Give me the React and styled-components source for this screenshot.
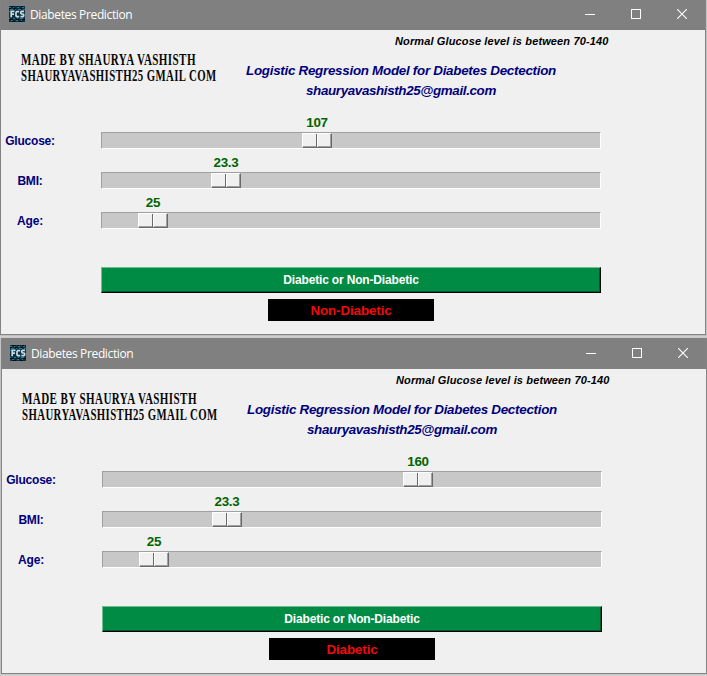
import React from "react";
import styled, { createGlobalStyle } from "styled-components";

const GlobalStyle = createGlobalStyle`
  * { box-sizing: border-box; }
  body { margin: 0; background: #d0d0d0; overflow: hidden; }
`;

const Desktop = styled.main`
  width: 707px;
  height: 676px;
  overflow: hidden;
  display: flex;
  flex-direction: column;
  gap: 3px;
  background: linear-gradient(#c3c3c3 0 335px, #aaa 335px, #d4d4d4 336px, #c4c4c4 338px, #c3c3c3 674px, #d8d8d8 676px);
  font-family: "Liberation Sans", Arial, sans-serif;
`;

const Window = styled.section`
  width: 706px;
  height: ${(p) => (p.$offset ? 336 : 335)}px;
  margin-left: ${(p) => p.$offset}px;
  flex: none;
  display: flex;
  flex-direction: column;
  border: 1px solid #838383;
  border-top: 0;
  background: #f0f0f0;
`;

const TitleBar = styled.header`
  height: ${(p) => (p.$offset ? 31 : 30)}px;
  flex: none;
  display: flex;
  align-items: center;
  padding: ${(p) => (p.$offset ? "0 0 1px 8px" : "0 0 2px 8px")};
  background: #808080;
  color: #fff;
`;

const TitleText = styled.h1`
  margin: 0 auto 0 5px;
  padding-top: 2px;
  font: 400 12px/16px "Open Sans", sans-serif;
  letter-spacing: -0.36px;
  white-space: nowrap;
`;

const Controls = styled.div`
  display: flex;
  width: 138px;
`;

const ControlButton = styled.button`
  width: 46px;
  height: 28px;
  display: grid;
  place-items: center;
  padding: 0;
  border: 0;
  background: none;
`;

const Content = styled.div`
  flex: 1;
  display: flex;
  flex-direction: column;
`;

const Banner = styled.div`
  height: 82px;
  display: grid;
  grid-template-columns: 215px 1fr;
`;

const Signature = styled.div`
  padding: 22px 0 0 20px;
`;

const SignatureLine = styled.div`
  width: max-content;
  font: 700 16px/16px "Liberation Serif", serif;
  letter-spacing: 0.6px;
  color: #080808;
  white-space: nowrap;
  transform-origin: 0 50%;
  transform: scaleX(${(p) => p.$squeeze});
`;

const Heading = styled.div`
  font-style: italic;
  font-weight: 700;
  white-space: nowrap;
`;

const Hint = styled.p`
  margin: 3px 0 0 179px;
  font-size: 11px;
  letter-spacing: 0.13px;
  line-height: 16px;
  color: #000;
`;

const ModelTitle = styled.h2`
  width: 370px;
  margin: 12px 0 0;
  font-size: 13.4px;
  letter-spacing: -0.28px;
  line-height: 20px;
  text-align: center;
  color: #00007c;
`;

const Email = styled.span`
  letter-spacing: -0.37px;
`;

const Field = styled.div`
  height: 40px;
  display: grid;
  grid-template-columns: 100px 500px;
`;

const FieldLabel = styled.label`
  width: 58px;
  padding-top: 20px;
  font-size: 12px;
  font-weight: 700;
  letter-spacing: -0.2px;
  line-height: 18px;
  text-align: center;
  color: #00007c;
`;

const SliderValue = styled.output`
  display: block;
  width: 60px;
  height: 20px;
  padding-top: 1px;
  font-size: 13.4px;
  font-weight: 700;
  letter-spacing: -0.25px;
  line-height: 19px;
  text-align: center;
  color: #006400;
`;

const Track = styled.div`
  height: 17px;
  border: 1px solid;
  border-color: #a0a0a0 #fff #fff #a0a0a0;
  background: #c8c8c8;
`;

const Thumb = styled.div`
  width: 30px;
  height: 15px;
  display: grid;
  grid-template-columns: 14px 1fr;
  border: 1px solid;
  border-color: #fff #696969 #696969 #fff;
  background: #f0f0f0;
  box-shadow: inset -1px -1px #a0a0a0;

  &::before {
    content: "";
    border-right: 1px solid #696969;
  }

  &::after {
    content: "";
    border-left: 1px solid #fff;
  }
`;

const Actions = styled.div`
  width: 500px;
  margin: 35px 0 0 100px;
  display: flex;
  flex-direction: column;
  align-items: center;
  gap: 6px;
`;

const PredictButton = styled.button`
  width: 500px;
  height: 26px;
  padding: 0;
  border: 1px solid;
  border-color: #6cbd90 #000 #000 #6cbd90;
  box-shadow: inset -1px -1px #005a2e;
  background: #008b45;
  color: #fff;
  font: 700 12px/24px "Liberation Sans", Arial, sans-serif;
  letter-spacing: -0.17px;
`;

const Result = styled.output`
  width: 166px;
  height: 22px;
  background: #000;
  color: #f00a0a;
  font-size: 13.4px;
  font-weight: 700;
  letter-spacing: -0.12px;
  line-height: 23px;
  text-align: center;
`;

function AppIcon() {
  return (
    <svg width="16" height="16" viewBox="0 0 16 16">
      <g shapeRendering="crispEdges">
        <path fill="#10303f" d="M0 0h16v16H0z" />
        <path
          stroke="#1b7f98"
          d="M0 1.5h2m2 0h1m3 0h2m3 0h2M1 3.5h3m2 0h1m2 0h3m2 0h2M0 12.5h1m3 0h2m2 0h1m2 0h3M2 14.5h2m3 0h2m3 0h1M0 5.5h1"
        />
        <path
          stroke="#030b18"
          d="M2 .5h3m3 0h1m3 0h2M0 2.5h2m3 0h2m4 0h2M0 13.5h4m3 0h3m3 0h3M3 15.5h3m4 0h3"
        />
      </g>
      <path
        fill="none"
        stroke="#c4dce2"
        strokeWidth="1.7"
        d="M2.2 11.2V5.4H5.5M2 8.2h3M10.2 5.6H7.8L7 6.5v3.3l.8.8h2.4M15 5.4h-2.6l-.6.7v1.2l.6.7h1.5l.7.7v1.2l-.7.7h-2.5"
      />
    </svg>
  );
}

function WindowControls() {
  return (
    <Controls>
      <ControlButton aria-label="Minimize">
        <svg width="10" height="10" shapeRendering="crispEdges">
          <path d="M0 5.5h10" stroke="#fff" />
        </svg>
      </ControlButton>
      <ControlButton aria-label="Maximize">
        <svg width="10" height="10" shapeRendering="crispEdges">
          <path d="M.5.5h9v9h-9z" stroke="#fff" fill="none" />
        </svg>
      </ControlButton>
      <ControlButton aria-label="Close">
        <svg width="10" height="10">
          <path d="m0 0 10 10M10 0 0 10" stroke="#fff" strokeWidth="1.1" />
        </svg>
      </ControlButton>
    </Controls>
  );
}

function Slider({ label, value, position }) {
  return (
    <Field>
      <FieldLabel>{label}</FieldLabel>
      <div>
        <SliderValue style={{ marginLeft: position - 14 }}>{value}</SliderValue>
        <Track>
          <Thumb style={{ marginLeft: position }} />
        </Track>
      </div>
    </Field>
  );
}

function PredictionWindow({ offset, glucose, glucosePosition, result }) {
  return (
    <Window $offset={offset}>
      <TitleBar $offset={offset}>
        <AppIcon />
        <TitleText>Diabetes Prediction</TitleText>
        <WindowControls />
      </TitleBar>
      <Content>
        <Banner>
          <Signature>
            <SignatureLine $squeeze={0.69}>MADE BY SHAURYA VASHISTH</SignatureLine>
            <SignatureLine $squeeze={0.674}>SHAURYAVASHISTH25 GMAIL COM</SignatureLine>
          </Signature>
          <Heading>
            <Hint>Normal Glucose level is between 70-140</Hint>
            <ModelTitle>
              Logistic Regression Model for Diabetes Dectection
              <br />
              <Email>shauryavashisth25@gmail.com</Email>
            </ModelTitle>
          </Heading>
        </Banner>
        <Slider label="Glucose:" value={glucose} position={glucosePosition} />
        <Slider label="BMI:" value="23.3" position={109} />
        <Slider label="Age:" value="25" position={36} />
        <Actions>
          <PredictButton>Diabetic or Non-Diabetic</PredictButton>
          <Result>{result}</Result>
        </Actions>
      </Content>
    </Window>
  );
}

export default function App() {
  return (
    <>
      <GlobalStyle />
      <Desktop>
        <PredictionWindow offset={0} glucose="107" glucosePosition={200} result="Non-Diabetic" />
        <PredictionWindow offset={1} glucose="160" glucosePosition={300} result="Diabetic" />
      </Desktop>
    </>
  );
}
